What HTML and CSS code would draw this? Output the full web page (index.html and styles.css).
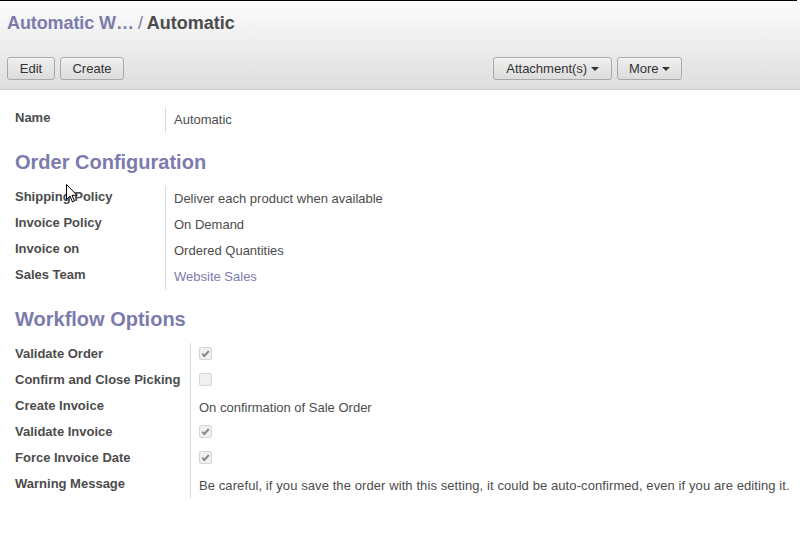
FILE: index.html
```html
<!DOCTYPE html>
<html>
<head>
<meta charset="utf-8">
<link rel="stylesheet" href="styles.css">
</head>
<body>
<div class="topline"></div>
<header class="cp">
  <h2 class="crumbs"><a class="crumb">Automatic W…</a><span class="sep"> / </span><span class="cur">Automatic</span></h2>
  <div class="bar">
    <div class="left">
      <button class="btn b-edit">Edit</button>
      <button class="btn b-create">Create</button>
    </div>
    <div class="right">
      <button class="btn b-att">Attachment(s) <span class="caret"></span></button>
      <button class="btn b-more">More <span class="caret"></span></button>
    </div>
  </div>
</header>
<main class="sheet">
  <div class="group g1">
    <div class="lbl">Name</div><div class="val">Automatic</div>
  </div>
  <h1 class="sep-title">Order Configuration</h1>
  <div class="group g1">
    <div class="lbl">Shipping Policy</div><div class="val">Deliver each product when available</div>
    <div class="lbl">Invoice Policy</div><div class="val">On Demand</div>
    <div class="lbl">Invoice on</div><div class="val">Ordered Quantities</div>
    <div class="lbl">Sales Team</div><div class="val"><a class="link">Website Sales</a></div>
  </div>
  <h1 class="sep-title">Workflow Options</h1>
  <div class="group g2">
    <div class="lbl">Validate Order</div><div class="val"><span class="cb"><svg viewBox="0 0 13 13" width="13" height="13"><path d="M3.2 6.8 L5.4 9 L9.8 4" fill="none" stroke="#8a8a8a" stroke-width="2"/></svg></span></div>
    <div class="lbl">Confirm and Close Picking</div><div class="val"><span class="cb"></span></div>
    <div class="lbl">Create Invoice</div><div class="val">On confirmation of Sale Order</div>
    <div class="lbl">Validate Invoice</div><div class="val"><span class="cb"><svg viewBox="0 0 13 13" width="13" height="13"><path d="M3.2 6.8 L5.4 9 L9.8 4" fill="none" stroke="#8a8a8a" stroke-width="2"/></svg></span></div>
    <div class="lbl">Force Invoice Date</div><div class="val"><span class="cb"><svg viewBox="0 0 13 13" width="13" height="13"><path d="M3.2 6.8 L5.4 9 L9.8 4" fill="none" stroke="#8a8a8a" stroke-width="2"/></svg></span></div>
    <div class="lbl">Warning Message</div><div class="val warn">Be careful, if you save the order with this setting, it could be auto-confirmed, even if you are editing it.</div>
  </div>
</main>
<svg class="cursor" width="12" height="19" viewBox="0 0 12 19"><path d="M0.5 0.5 L0.5 15.5 L4 12 L6.5 18 L8.5 17 L6 11.3 L11 11.3 Z" fill="#fff" stroke="#000" stroke-width="1"/></svg>
</body>
</html>
```
FILE: styles.css
```css
html, body { margin: 0; padding: 0; background: #fff; }
body {
  font-family: "Liberation Sans", Arial, sans-serif;
  font-size: 13px;
  color: #4c4c4c;
  position: relative;
  width: 800px;
  height: 560px;
  overflow: hidden;
}
.topline { height: 1px; background: #000; width: 797px; }
.cp {
  height: 89px;
  box-sizing: border-box;
  border-bottom: 1px solid #cacaca;
  background: linear-gradient(#fcfcfc, #dedede);
  padding: 0 7px;
}
.crumbs {
  margin: 0;
  padding-top: 12px;
  height: 20px;
  font-size: 18px;
  line-height: 20px;
  font-weight: bold;
}
.crumb { color: #7c7bad; letter-spacing: -0.1px; }
.sep { color: #7c7bad; font-weight: normal; letter-spacing: -0.7px; }
.cur { color: #4c4c4c; }
.bar {
  display: flex;
  margin-top: 24px;
  width: 675px;
  justify-content: space-between;
}
.left, .right { display: flex; gap: 5px; }
.btn {
  height: 23px;
  padding: 0;
  font-family: "Liberation Sans", Arial, sans-serif;
  font-size: 13px;
  color: #333;
  background: linear-gradient(#efefef, #dcdcdc);
  border: 1px solid #a9a9a9;
  border-radius: 3px;
  line-height: 21px;
  box-shadow: inset 0 1px 0 rgba(255,255,255,0.5);
}
.b-edit { width: 48px; }
.b-create { width: 64px; }
.b-att { width: 119px; }
.b-more { width: 65px; }
.caret {
  display: inline-block;
  width: 0; height: 0;
  border-left: 4px solid transparent;
  border-right: 4px solid transparent;
  border-top: 4px solid #333;
  vertical-align: 2px;
}
.sheet { padding: 17px 15px 0 15px; }
.group {
  display: grid;
  grid-auto-rows: 26px;
}
.g1 { grid-template-columns: 150px 1fr; }
.g2 { grid-template-columns: 175px 1fr; }
.lbl { font-weight: bold; color: #4c4c4c; padding-top: 3px; line-height: 15px; white-space: nowrap; }
.val {
  border-left: 1px solid #dcdcdc;
  padding-left: 8px;
  padding-top: 5px;
  line-height: 15px;
  color: #4c4c4c;
  white-space: nowrap;
}
.warn { letter-spacing: 0.09px; }
.link { color: #7c7bad; }
.sep-title {
  font-size: 20px;
  font-weight: bold;
  color: #7c7bad;
  margin: 17px 0 12px 0;
  line-height: 24px;
  height: 24px;
}
.cb {
  display: block;
  width: 11px; height: 11px;
  margin-top: -1px;
  border: 1px solid #d6d6d6;
  border-radius: 2px;
  background: #f0f0f0;
  position: relative;
}
.cb svg { position: absolute; left: -1px; top: -1px; }
.cursor { position: absolute; left: 66px; top: 184px; }
```
